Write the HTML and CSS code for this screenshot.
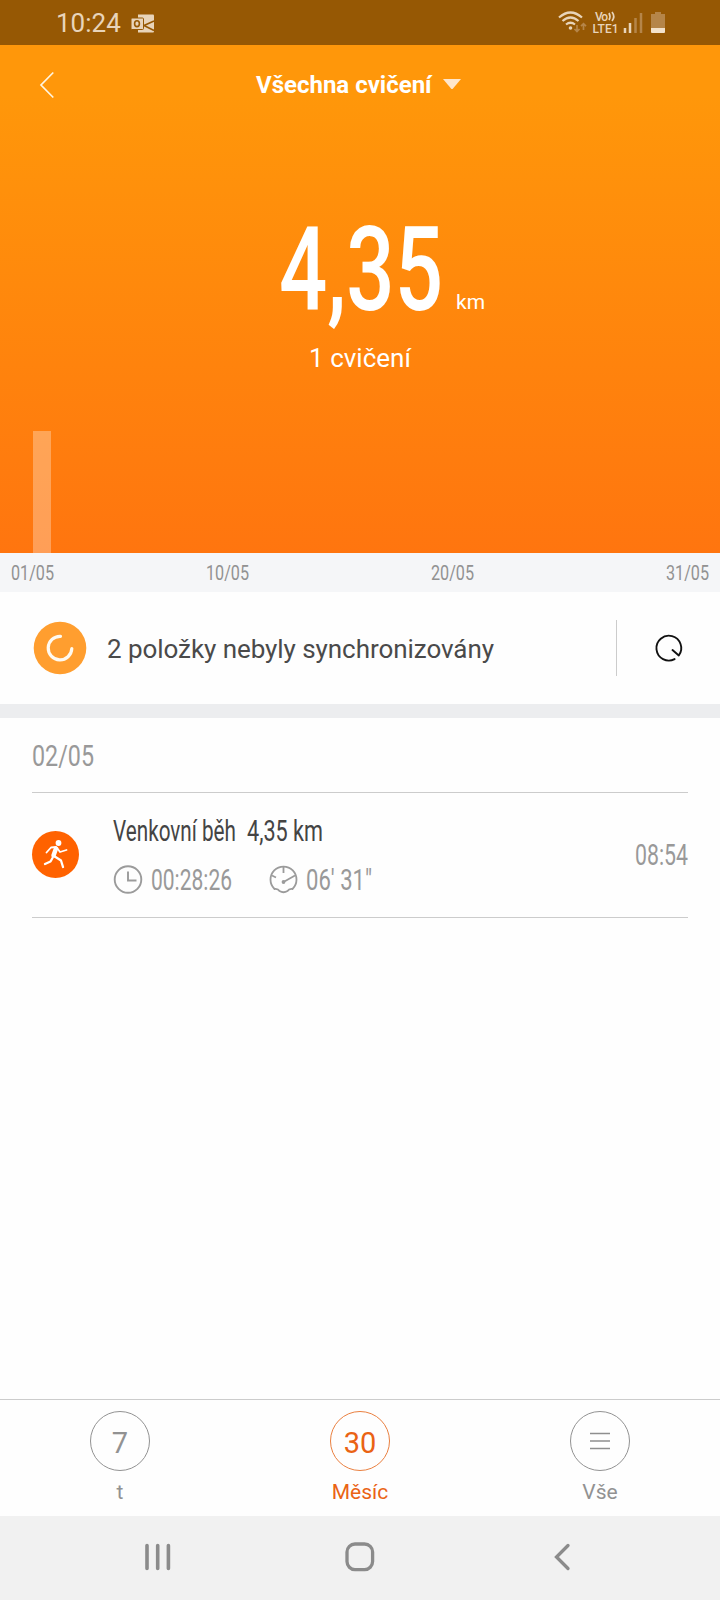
FILE: index.html
```html
<!DOCTYPE html>
<html lang="cs">
<head>
    <meta charset="UTF-8">
    <meta name="viewport" content="width=device-width, initial-scale=1.0">
    <title>Všechna cvičení</title>
    <link rel="stylesheet" href="styles.css">
</head>
<body>

    <div class="status-bar">
        <span class="clock">10:24</span>
        <svg class="mail-icon" width="24" height="19" viewBox="0 0 24 19">
            <path d="M7 .5h15q1 0 1 1v16q0 1-1 1H7z" fill="#e8d4ba"/>
            <path d="M13 11.500l10-4.500M13 11.500l10 5" stroke="#965804" stroke-width="1.600"/>
            <rect x="0" y="4" width="12.500" height="11.500" rx="1" fill="#e8d4ba" stroke="#965804"/>
            <ellipse cx="6" cy="9.700" rx="2.400" ry="2.900" fill="none" stroke="#965804" stroke-width="1.600"/>
        </svg>
        <svg class="system-icons" width="108" height="24" viewBox="0 0 108 24">
            <g fill="none" stroke="#e8d4ba" stroke-width="2.200">
                <path d="M1 6.500Q12.500-3.500 24 6.500M4.500 10Q12.500 3 20.500 10M8 13.500Q12.500 10 17 13.500"/>
            </g>
            <circle cx="12.500" cy="17" r="1.800" fill="#e8d4ba"/>
            <path d="M19 14v6M16.500 18l2.500 2.500 2.500-2.500M25.500 19v-6M23 15.200l2.500-2.500 2.500 2.500" fill="none" stroke="#b58549" stroke-width="1.700"/>
            <text class="volte" x="37" y="10" textLength="13">Vo</text>
            <path d="M51 2q2 3.500 0 7M54 1q3.500 4.500 0 9" fill="none" stroke="#e8d4ba" stroke-width="1.700"/>
            <text class="volte" x="34.500" y="22" textLength="26">LTE1</text>
            <path d="M67 22v-5M72 22V12" stroke="#e8d4ba" stroke-width="2.500"/>
            <path d="M77.500 22V7M83 22V2" stroke="#b58549" stroke-width="2.500"/>
            <path d="M97 1h6v2h4v14H93V3h4z" fill="#b58549"/>
            <path d="M93 17h14v4q0 1-1 1H94q-1 0-1-1z" fill="#f3e2cb"/>
        </svg>
    </div>

    <div class="summary">
        <div class="title-bar">
            <svg class="back" width="16" height="28" viewBox="0 0 16 28">
                <path d="M14.300 1.500L2 14l12.300 12.500" fill="none" stroke="#fff5e0" stroke-width="1.700"/>
            </svg>
            <h1>Všechna cvičení</h1>
            <svg class="caret" width="20" height="12" viewBox="0 0 20 12">
                <path d="M1 1h18l-8 9.500q-1 1-2 0z" fill="#ffe6cb"/>
            </svg>
        </div>
        <div class="distance">
            <svg width="164" height="120">
                <text class="distance-value" x="0" y="92" textLength="164" lengthAdjust="spacingAndGlyphs">4,35</text>
            </svg>
            <span class="unit">km</span>
        </div>
        <p class="count">1 cvičení</p>
        <div class="chart">
            <div class="bar"></div>
        </div>
    </div>

    <div class="axis">
        <svg width="44" height="39"><text x="0" y="26.500" textLength="43" lengthAdjust="spacingAndGlyphs">01/05</text></svg>
        <svg width="44" height="39"><text x="0" y="26.500" textLength="43" lengthAdjust="spacingAndGlyphs">10/05</text></svg>
        <svg width="44" height="39"><text x="0" y="26.500" textLength="43" lengthAdjust="spacingAndGlyphs">20/05</text></svg>
        <svg width="44" height="39"><text x="0" y="26.500" textLength="43" lengthAdjust="spacingAndGlyphs">31/05</text></svg>
    </div>

    <div class="sync">
        <svg width="54" height="54" viewBox="0 0 54 54">
            <circle cx="27" cy="27" r="26.300" fill="#ff9e2f"/>
            <path d="M27.500 15.300A11.800 11.800 0 1 0 38.800 27.500" fill="none" stroke="#fffaf0" stroke-width="3.200" stroke-linecap="round"/>
        </svg>
        <span class="sync-text">2 položky nebyly synchronizovány</span>
        <div class="sync-action">
            <svg width="30" height="30" viewBox="0 0 30 30">
                <path d="M21.600 25.100A12.400 12.400 0 1 1 25.800 21.500L19.500 16" fill="none" stroke="#111" stroke-width="1.900" stroke-linecap="round" stroke-linejoin="round"/>
            </svg>
        </div>
    </div>

    <div class="list">
        <div class="day">
            <svg width="64" height="73"><text x="0" y="47.500" textLength="62" lengthAdjust="spacingAndGlyphs">02/05</text></svg>
        </div>
        <div class="workout">
            <svg class="run-icon" width="48" height="48" viewBox="0 0 48 48">
                <circle cx="23.500" cy="23.500" r="23.500" fill="#ff6200"/>
                <circle cx="26.500" cy="12" r="2.900" fill="#fff"/>
                <g fill="none" stroke="#fff" stroke-linecap="round" stroke-linejoin="round">
                    <path d="M24 17.500l-2.500 7" stroke-width="4.500"/>
                    <path d="M24 16l-5 .5-4.500 5M25.500 17.500l2.500 3.500 6.500-2" stroke-width="1.800"/>
                    <path d="M22 25l7 4.500 2 6.500M20.500 27l-2 3.500-5.500 2.500" stroke-width="2.300"/>
                </g>
            </svg>
            <div class="details">
                <div class="name">
                    <svg width="124" height="36"><text x="0" y="28" textLength="123" lengthAdjust="spacingAndGlyphs">Venkovní běh</text></svg>
                    <svg width="78" height="36"><text x="0" y="28" textLength="76" lengthAdjust="spacingAndGlyphs">4,35 km</text></svg>
                </div>
                <div class="stats">
                    <svg width="30" height="30" viewBox="0 0 30 30">
                        <path d="M15 2.200a13.300 13.300 0 1 1 0 26.600a13.300 13.300 0 1 1 0-26.600M15 7.500v9h8.500" fill="none" stroke="#9b9b9b" stroke-width="1.900"/>
                    </svg>
                    <svg class="duration" width="82" height="36"><text x="0" y="29" textLength="81" lengthAdjust="spacingAndGlyphs">00:28:26</text></svg>
                    <svg class="gauge" width="30" height="30" viewBox="0 0 30 30">
                        <g fill="none" stroke="#9b9b9b" stroke-width="1.800">
                            <path d="M5.500 25A13 13 0 1 1 23.500 25Q20 24.500 18.500 27Q14.500 29.500 10.500 27Q9 24.500 5.500 25z"/>
                            <path d="M14.500 3v6M3 11.500l4 2M14.500 18l11.500-6.500"/>
                        </g>
                        <circle cx="14.500" cy="18" r="1.900" fill="#9b9b9b"/>
                    </svg>
                    <svg class="pace" width="68" height="36"><text x="0" y="29" textLength="66" lengthAdjust="spacingAndGlyphs">06' 31"</text></svg>
                </div>
            </div>
            <svg class="time" width="54" height="36"><text x="1" y="28" textLength="53" lengthAdjust="spacingAndGlyphs">08:54</text></svg>
        </div>
    </div>

    <div class="tabs">
        <div class="tab">
            <div class="circle">7</div>
            <span>t</span>
        </div>
        <div class="tab active">
            <div class="circle">30</div>
            <span>Měsíc</span>
        </div>
        <div class="tab">
            <div class="circle menu">
                <svg width="20" height="18" viewBox="0 0 20 18">
                    <path d="M0 1.500h20M0 9h20M0 16.500h20" stroke="#8e8e8e" stroke-width="1.500"/>
                </svg>
            </div>
            <span>Vše</span>
        </div>
    </div>

    <div class="nav-bar">
        <svg width="26" height="28" viewBox="0 0 26 28">
            <path d="M2 2.500v23M12.700 2.500v23M23.400 2.500v23" stroke="#8b8b8b" stroke-width="3.600" stroke-linecap="round"/>
        </svg>
        <svg class="home" width="30" height="30" viewBox="0 0 30 30">
            <rect x="2" y="2" width="25.600" height="25.600" rx="8" fill="none" stroke="#8b8b8b" stroke-width="3.300"/>
        </svg>
        <svg width="18" height="28" viewBox="0 0 18 28">
            <path d="M15 2.500L3.500 14 15 25.500" fill="none" stroke="#8b8b8b" stroke-width="3.300" stroke-linecap="round"/>
        </svg>
    </div>

</body>
</html>
```
FILE: styles.css
```css
* {
    box-sizing: border-box;
}

body {
    font-family: Roboto, sans-serif;
    background-color: #fefefe;
    margin: 0;
    width: 720px;
    height: 1600px;
    display: flex;
    flex-direction: column;
    overflow: hidden;
}

svg {
    display: block;
    flex: none;
    overflow: visible;
}

.status-bar {
    height: 45px;
    background-color: #965804;
    display: flex;
    align-items: center;
    padding: 1px 54px 0 56px;
}

.clock {
    font-size: 26px;
    color: #e8d4ba;
}

.mail-icon {
    margin-left: 10px;
}

.system-icons {
    margin: 0 0 0 auto;
}

.volte {
    font-size: 12px;
    font-weight: 500;
    fill: #e8d4ba;
}

.summary {
    height: 508px;
    background: linear-gradient(#ff970a, #ff970a 10%, #ff750f);
    color: #fff;
    display: flex;
    flex-direction: column;
}

.title-bar {
    height: 79px;
    display: flex;
    align-items: center;
    padding-left: 39px;
}

h1 {
    font-size: 24px;
    font-weight: 700;
    margin: 1px 0 0 201px;
}

.caret {
    margin: 0 0 1px 10px;
}

.distance {
    height: 120px;
    margin: 94px 0 0 279px;
    display: flex;
}

.distance-value {
    font-size: 117px;
    font-weight: 500;
    fill: #fff;
}

.unit {
    font-size: 21px;
    margin: 72px 0 0 13px;
}

.count {
    font-size: 26px;
    text-align: center;
    margin: 5px 0 0;
}

.chart {
    height: 122px;
    margin-top: auto;
    padding-left: 33px;
}

.bar {
    width: 18px;
    height: 100%;
    background-color: rgba(255, 255, 255, 0.3);
}

.axis {
    height: 39px;
    background-color: #f5f6f8;
    display: grid;
    grid-template-columns: 195px 225px 235px 44px;
    padding-left: 11px;
    font-size: 21px;
}

.axis text {
    fill: #929292;
}

.sync {
    height: 126px;
    border-bottom: 14px solid #ecedef;
    display: flex;
    align-items: center;
    padding-left: 33px;
}

.sync-text {
    font-size: 26px;
    letter-spacing: -0.06px;
    color: #4a4a4a;
    margin: 2px 0 0 20px;
}

.sync-action {
    width: 104px;
    height: 56px;
    margin-left: auto;
    border-left: 1px solid #ccc;
    display: flex;
    align-items: center;
    padding: 2px 0 0 36px;
}

.list {
    flex: 1;
    padding: 0 32px;
    font-size: 30px;
}

.list text {
    fill: #999;
}

.day {
    height: 75px;
    border-bottom: 1px solid #ccc;
}

.workout {
    height: 125px;
    border-bottom: 1px solid #ccc;
    display: flex;
    align-items: center;
}

.details {
    margin-left: 33px;
}

.name {
    display: flex;
    gap: 10px;
}

.list .name text {
    fill: #444;
}

.stats {
    display: flex;
    align-items: center;
    margin-top: 12px;
}

.duration {
    margin-left: 8px;
}

.gauge {
    margin-left: 36px;
}

.pace {
    margin-left: 7px;
}

.time {
    margin-left: auto;
}

.tabs {
    height: 117px;
    border-top: 1px solid #ccc;
    display: flex;
    justify-content: center;
}

.tab {
    width: 240px;
    display: flex;
    flex-direction: column;
    align-items: center;
    padding-top: 11px;
    font-size: 21px;
    color: #929292;
}

.circle {
    width: 60px;
    height: 60px;
    border: 1px solid #929292;
    border-radius: 50%;
    display: flex;
    align-items: center;
    justify-content: center;
    font-size: 29px;
    padding-top: 3px;
    margin-bottom: 9px;
}

.menu {
    padding-top: 0;
}

.active {
    color: #ea6314;
}

.active .circle {
    border-color: #ea8040;
}

.nav-bar {
    height: 84px;
    background-color: #f1f1f1;
    display: flex;
    align-items: center;
    justify-content: space-between;
    padding: 0 149px 3px 145px;
}

.home {
    margin-right: 4px;
}
```
